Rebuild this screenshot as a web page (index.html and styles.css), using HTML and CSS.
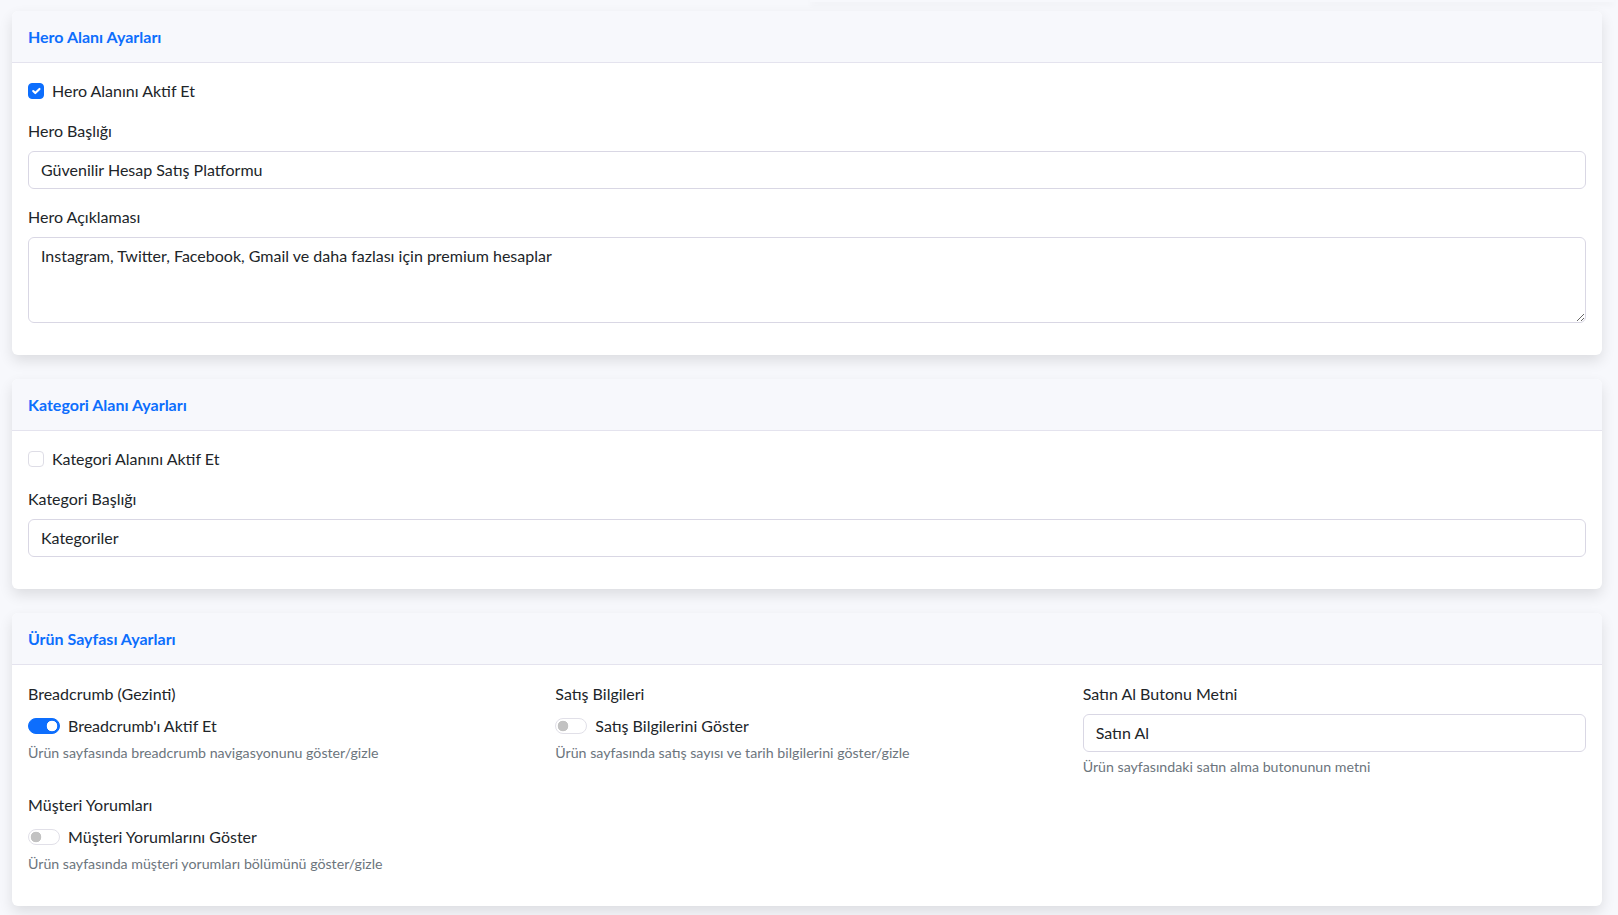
FILE: index.html
```html
<!DOCTYPE html>
<html lang="tr">
<head>
    <meta charset="UTF-8">
    <title>Site Ayarları</title>
    <link rel="stylesheet" href="styles.css">
</head>
<body>
    <div class="top-edge"></div>
    <div class="settings">

        <div class="card">
            <div class="card-header">
                <h6>Hero Alanı Ayarları</h6>
            </div>
            <div class="card-body">
                <div class="form-check mb-3">
                    <input class="check" type="checkbox" id="heroActive" checked>
                    <label for="heroActive">Hero Alanını Aktif Et</label>
                </div>
                <div class="mb-3">
                    <label class="form-label" for="heroTitle">Hero Başlığı</label>
                    <input class="form-control" type="text" id="heroTitle" value="Güvenilir Hesap Satış Platformu">
                </div>
                <div class="mb-3">
                    <label class="form-label" for="heroDesc">Hero Açıklaması</label>
                    <textarea class="form-control" id="heroDesc" rows="3">Instagram, Twitter, Facebook, Gmail ve daha fazlası için premium hesaplar</textarea>
                </div>
            </div>
        </div>

        <div class="card">
            <div class="card-header">
                <h6>Kategori Alanı Ayarları</h6>
            </div>
            <div class="card-body">
                <div class="form-check mb-3">
                    <input class="check" type="checkbox" id="catActive">
                    <label for="catActive">Kategori Alanını Aktif Et</label>
                </div>
                <div class="mb-3">
                    <label class="form-label" for="catTitle">Kategori Başlığı</label>
                    <input class="form-control" type="text" id="catTitle" value="Kategoriler">
                </div>
            </div>
        </div>

        <div class="card">
            <div class="card-header">
                <h6>Ürün Sayfası Ayarları</h6>
            </div>
            <div class="card-body product-body">
                <div class="row">
                    <div class="col">
                        <div class="mb-3">
                            <label class="form-label">Breadcrumb (Gezinti)</label>
                            <div class="form-check form-switch">
                                <input class="switch" type="checkbox" id="breadcrumb" checked>
                                <label for="breadcrumb">Breadcrumb'ı Aktif Et</label>
                            </div>
                            <small class="form-text">Ürün sayfasında breadcrumb navigasyonunu göster/gizle</small>
                        </div>
                    </div>
                    <div class="col">
                        <div class="mb-3">
                            <label class="form-label">Satış Bilgileri</label>
                            <div class="form-check form-switch">
                                <input class="switch" type="checkbox" id="salesInfo">
                                <label for="salesInfo">Satış Bilgilerini Göster</label>
                            </div>
                            <small class="form-text">Ürün sayfasında satış sayısı ve tarih bilgilerini göster/gizle</small>
                        </div>
                    </div>
                    <div class="col">
                        <div class="mb-3">
                            <label class="form-label" for="buyText">Satın Al Butonu Metni</label>
                            <input class="form-control" type="text" id="buyText" value="Satın Al">
                            <small class="form-text">Ürün sayfasındaki satın alma butonunun metni</small>
                        </div>
                    </div>
                    <div class="col">
                        <div class="mb-3">
                            <label class="form-label">Müşteri Yorumları</label>
                            <div class="form-check form-switch">
                                <input class="switch" type="checkbox" id="reviews">
                                <label for="reviews">Müşteri Yorumlarını Göster</label>
                            </div>
                            <small class="form-text">Ürün sayfasında müşteri yorumları bölümünü göster/gizle</small>
                        </div>
                    </div>
                </div>
            </div>
        </div>

    </div>
</body>
</html>
```
FILE: styles.css
```css
:root {
    --primary: #0d6efd;
    --page-bg: #f7f8fc;
    --text: #212529;
    --muted: #6c757d;
    --line: #d9d7e4;
}

* {
    box-sizing: border-box;
}

body {
    margin: 0;
    background: var(--page-bg);
    color: var(--text);
    font-family: 'Lato', sans-serif;
    font-size: 16px;
    line-height: 24px;
}

.top-edge {
    height: 2px;
    margin: 0 4px 9px 810px;
    background: var(--page-bg);
    box-shadow: 0 2px 6px rgba(0, 0, 0, 0.07);
}

.settings {
    padding: 0 16px 0 12px;
}

.card {
    background: #fff;
    border-radius: 6px;
    box-shadow: 0 6px 14px rgba(0, 0, 0, 0.11);
    margin-bottom: 24px;
    overflow: hidden;
}

.card-header {
    background: var(--page-bg);
    border-bottom: 1px solid #e4e3ee;
    padding: 16px;
}

.card-header h6 {
    margin: 0;
    font-size: 16px;
    font-weight: 700;
    line-height: 19px;
    color: var(--primary);
}

.card-body {
    padding: 16px;
}

.product-body {
    padding-top: 17px;
}

.mb-3 {
    margin-bottom: 16px;
}

.form-label {
    display: block;
    margin-bottom: 8px;
}

.form-control {
    display: block;
    width: 100%;
    padding: 6px 12px;
    font: inherit;
    color: var(--text);
    background: #fff;
    border: 1px solid var(--line);
    border-radius: 6px;
    outline: none;
}

textarea.form-control {
    height: 86px;
    resize: vertical;
}

.form-check {
    min-height: 24px;
    padding-left: 24px;
}

.form-check .check,
.form-check .switch {
    float: left;
    margin: 4px 0 0 -24px;
    width: 16px;
    height: 16px;
    appearance: none;
    border: 1px solid #dedde6;
    border-radius: 4px;
    background-color: #fff;
}

.form-check .check:checked {
    background-color: var(--primary);
    border-color: var(--primary);
    background-image: url("data:image/svg+xml,%3csvg xmlns='http://www.w3.org/2000/svg' viewBox='0 0 20 20'%3e%3cpath fill='none' stroke='%23fff' stroke-linecap='round' stroke-linejoin='round' stroke-width='3' d='m6 10 3 3 6-6'/%3e%3c/svg%3e");
    background-size: 100% 100%;
}

.form-switch {
    padding-left: 40px;
}

.form-check .switch {
    width: 32px;
    margin-left: -40px;
    border-radius: 16px;
    border-color: #e1e0e8;
    background-image: radial-gradient(circle at 7px 50%, #c2c2c2 0, #c2c2c2 5px, transparent 5.6px);
}

.form-check .switch:checked {
    background-color: var(--primary);
    border-color: var(--primary);
    background-image: radial-gradient(circle at calc(100% - 7px) 50%, #fff 0, #fff 5px, transparent 5.6px);
}

.form-text {
    display: block;
    margin-top: 4px;
    font-size: 14.2px;
    line-height: 21px;
    color: var(--muted);
}

.row {
    display: flex;
    flex-wrap: wrap;
    margin: 0 -12px;
}

.col {
    flex: 0 0 33.3333%;
    padding: 0 12px;
}
```
